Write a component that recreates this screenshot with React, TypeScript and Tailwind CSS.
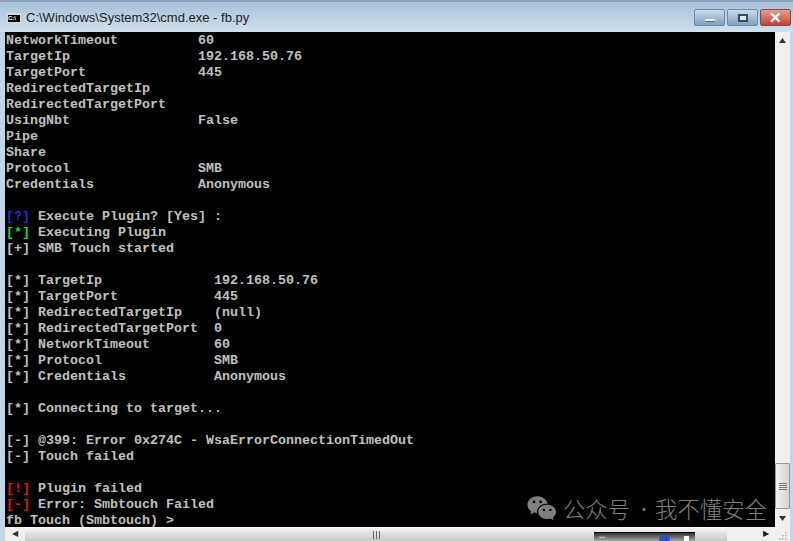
import React from "react";

type Seg = { t: string; c?: string };

const RED = "text-[#e01818]";
const BLUE = "text-[#1c2fd8]";
const GREEN = "text-[#22d822]";

const plain = (t: string): Seg[] => [{ t }];
const tag = (t: string, rest: string, c?: string): Seg[] => [{ t, c }, { t: " " + rest }];

const lines: Seg[][] = [
  plain("NetworkTimeout          60"),
  plain("TargetIp                192.168.50.76"),
  plain("TargetPort              445"),
  plain("RedirectedTargetIp"),
  plain("RedirectedTargetPort"),
  plain("UsingNbt                False"),
  plain("Pipe"),
  plain("Share"),
  plain("Protocol                SMB"),
  plain("Credentials             Anonymous"),
  plain(""),
  tag("[?]", "Execute Plugin? [Yes] :", BLUE),
  tag("[*]", "Executing Plugin", GREEN),
  plain("[+] SMB Touch started"),
  plain(""),
  plain("[*] TargetIp              192.168.50.76"),
  plain("[*] TargetPort            445"),
  plain("[*] RedirectedTargetIp    (null)"),
  plain("[*] RedirectedTargetPort  0"),
  plain("[*] NetworkTimeout        60"),
  plain("[*] Protocol              SMB"),
  plain("[*] Credentials           Anonymous"),
  plain(""),
  plain("[*] Connecting to target..."),
  plain(""),
  plain("[-] @399: Error 0x274C - WsaErrorConnectionTimedOut"),
  plain("[-] Touch failed"),
  plain(""),
  tag("[!]", "Plugin failed", RED),
  tag("[-]", "Error: Smbtouch Failed", RED),
  plain("fb Touch (Smbtouch) >"),
];

const WeChat = () => (
  <svg width="30" height="26" viewBox="0 0 32 27" className="shrink-0">
    <path d="M11 1C5 1 .5 5 .5 10c0 3 1.500 5.200 4 7l-1 3.500 4-2.200c1 .3 2 .4 3.200 .5C10 13 15 8.500 22 9 21 4.500 16.500 1 11 1z" fill="#808080" />
    <path d="M21.500 10C26.800 10 31 13.500 31 17.800c0 2.400-1.300 4.400-3.300 5.800l.8 3-3.500-1.900c-1.200 .4-2.300 .5-3.500 .5-5.300 0-9.500-3.500-9.500-7.800S16.200 10 21.500 10z" fill="#808080" />
    <circle cx="7.500" cy="7" r="1.500" fill="#000" />
    <circle cx="14.500" cy="7" r="1.500" fill="#000" />
    <circle cx="18" cy="15.500" r="1.300" fill="#000" />
    <circle cx="25" cy="15.500" r="1.300" fill="#000" />
  </svg>
);

const Arrow = ({ d }: { d: string }) => (
  <svg width="7" height="5" viewBox="0 0 7 5">
    <path d={d} fill="#333" />
  </svg>
);

export default function App() {
  return (
    <div className="relative w-[793px] h-[541px] overflow-hidden flex flex-col bg-[#c3d6e8] font-['Liberation_Sans',sans-serif]">
      {/* title bar */}
      <div className="h-8 shrink-0 flex items-end pb-[7px] pl-[7px] pr-[2px] border-t-2 border-[#8aa0b8] bg-gradient-to-b from-[#a9c1d9] to-[#cfe0ee]">
        <div className="w-[14px] h-[10px] mb-[2px] bg-black border-t-2 border-x border-b border-[#d8d8d8] text-[6px] leading-[7px] text-white font-bold overflow-hidden mr-[5px]">
          C:\
        </div>
        <span className="text-[13px] leading-[15px] text-[#222]">C:\Windows\System32\cmd.exe - fb.py</span>
        <div className="ml-auto flex gap-[2px] self-start mt-[7px]">
          <div className="w-[31px] h-[17px] rounded-[2px] border border-[#6f8ba6] bg-gradient-to-b from-[#c9dbea] to-[#7fa0bf] flex items-end justify-center pb-[3px]">
            <div className="w-[10px] h-[3px] bg-[#eef2f6] border-b border-[#667]" />
          </div>
          <div className="w-[31px] h-[17px] rounded-[2px] border border-[#6f8ba6] bg-gradient-to-b from-[#c9dbea] to-[#7fa0bf] flex items-center justify-center">
            <div className="w-[10px] h-[8px] border-2 border-[#3c4a5c] bg-[#dfe8f0]" />
          </div>
          <div className="w-[31px] h-[17px] rounded-[2px] border border-[#8c4a40] bg-gradient-to-b from-[#e0a090] to-[#c04030] flex items-center justify-center text-white text-[15px] font-bold leading-none">
            ✕
          </div>
        </div>
      </div>

      {/* console + vertical scrollbar */}
      <div className="flex-1 min-h-0 flex pl-[5px] pr-[3px]">
        <div className="relative flex-1 bg-black overflow-hidden pt-px font-['Liberation_Mono',monospace] font-bold text-[13.33px] leading-4 text-[#c0c0c0] whitespace-pre">
          {lines.map((segs, i) => (
            <div key={i} className="h-4 pl-px">
              {segs.map((s, j) => (
                <span key={j} className={s.c}>
                  {s.t}
                </span>
              ))}
            </div>
          ))}
          <div className="absolute right-[8px] bottom-[5px] flex items-center gap-[6px] font-['Noto_Sans_CJK_SC',sans-serif] font-light text-[22.400px] leading-7 text-[#808080]">
            <WeChat />
            <span>公众号</span>
            <span className="w-[13px] text-center text-[16px]">·</span>
            <span>我不懂安全</span>
          </div>
        </div>
        <div className="w-[15px] shrink-0 bg-[#f0f0f0] flex flex-col items-center justify-between">
          <div className="h-[17px] flex items-center"><Arrow d="M3.500 0 7 5H0z" /></div>
          <div className="flex-1 w-full" />
          <div className="w-full h-[46px] bg-gradient-to-r from-[#f2f2f2] to-[#d4d4d4] border border-[#999] rounded-[1px] flex flex-col items-center justify-center gap-px">
            <div className="w-[8px] h-px bg-[#777]" />
            <div className="w-[8px] h-px bg-[#777]" />
            <div className="w-[8px] h-px bg-[#777]" />
            <div className="w-[8px] h-px bg-[#777]" />
          </div>
          <div className="h-[18px] flex items-center"><Arrow d="M0 0h7L3.500 5z" /></div>
        </div>
      </div>

      {/* horizontal scrollbar */}
      <div className="h-[14px] shrink-0 flex items-center ml-[5px] mr-[3px] bg-[#f0f0f0]">
        <span className="w-5 text-[8px] text-[#333] text-center">◀</span>
        <div className="w-[702px] h-full bg-gradient-to-b from-[#f4f4f4] to-[#c8c8c8] border-t border-white flex items-center justify-center gap-[2px]">
          <div className="w-px h-2 bg-[#666]" />
          <div className="w-px h-2 bg-[#666]" />
          <div className="w-px h-2 bg-[#666]" />
        </div>
        <span className="w-[48px] pr-[6px] text-[8px] text-[#222] text-right">▶</span>
        <svg width="15" height="14" viewBox="0 0 15 14" className="shrink-0">
          <rect x="10" y="5" width="1.500" height="1.500" fill="#aaa" />
          <rect x="7" y="8" width="1.500" height="1.500" fill="#aaa" />
          <rect x="10" y="8" width="1.500" height="1.500" fill="#aaa" />
          <rect x="4" y="11" width="1.500" height="1.500" fill="#aaa" />
          <rect x="7" y="11" width="1.500" height="1.500" fill="#aaa" />
          <rect x="10" y="11" width="1.500" height="1.500" fill="#aaa" />
        </svg>
      </div>

      {/* strip overlapping the bottom edge */}
      <div className="absolute left-[594px] top-[532px] w-[101px] h-[9px] border-t border-black bg-gradient-to-b from-[#333] to-[#aaa]">
        <div className="absolute left-[5px] top-[1px] text-[6px] leading-[6px] text-[#ddd]">•••</div>
        <div className="absolute left-[65px] top-[2px] w-[11px] h-[11px] rounded-full bg-[#2a50c8]" />
        <div className="absolute left-[90px] top-[3px] w-[5px] h-[5px] bg-white" />
      </div>
    </div>
  );
}
